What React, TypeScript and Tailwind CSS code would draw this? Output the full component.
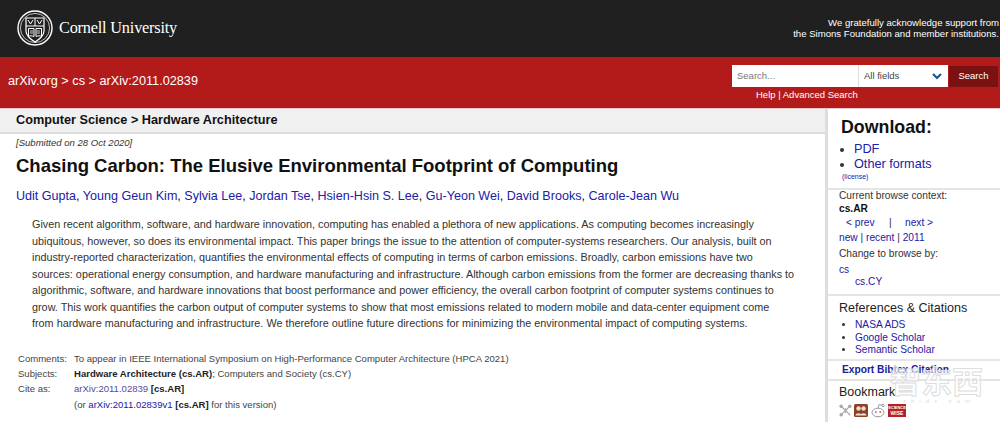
import React from "react";

const L = ({ children, className = "" }: { children: React.ReactNode; className?: string }) => (
  <a className={`text-[#2020a8] ${className}`}>{children}</a>
);

function Seal() {
  return (
    <svg width="36" height="36" viewBox="0 0 36 36" fill="none" stroke="#fff">
      <circle cx="18" cy="18" r="17" strokeWidth="1.4" />
      <circle cx="18" cy="18" r="14.6" strokeWidth="0.7" />
      <path d="M9 8h18v13c0 5-4.500 8-9 11-4.500-3-9-6-9-11z" strokeWidth="1.2" />
      <path d="M18 8v8M9 16h18" strokeWidth="1" />
      <path d="M11 10l2.500 4 2.500-4M20 10l2.500 4 2.500-4" strokeWidth="1" />
      <path d="M11.500 18.500h5.500v8c-2-.8-4-.8-5.500-.3zM24.500 18.500h-5.500v8c2-.8 4-.8 5.500-.3z" strokeWidth="1" />
      <path d="M13 21h3M13 23h3M20 21h3M20 23h3" strokeWidth="0.8" />
    </svg>
  );
}

function Bookmarks() {
  return (
    <div className="flex items-center gap-[2px] mt-[2px]">
      <svg width="13" height="13" viewBox="0 0 15 15" fill="none" stroke="#aaa" strokeWidth="1.300">
        <path d="M2 2l11 11M13 2L2 13M7.500 5v5" />
        <circle cx="2.500" cy="2.500" r="1.400" fill="#aaa" />
        <circle cx="12.500" cy="2.500" r="1.400" fill="#aaa" />
        <circle cx="2.500" cy="12.500" r="1.400" fill="#aaa" />
      </svg>
      <svg width="14" height="13" viewBox="0 0 14 13">
        <rect width="14" height="13" rx="1.500" fill="#8f3f28" />
        <circle cx="4.500" cy="4.500" r="2.200" fill="#efe0cc" />
        <circle cx="9.500" cy="4.500" r="2.200" fill="#efe0cc" />
        <path d="M1.500 11.500c0-3 6-3 6 0zM6.500 11.500c0-3 6-3 6 0z" fill="#efe0cc" />
      </svg>
      <svg width="16" height="15" viewBox="0 0 16 15" fill="#fff" stroke="#999" strokeWidth="1">
        <ellipse cx="8" cy="9.500" rx="6" ry="4.300" />
        <path d="M8 5l1-3.500 3 .8" fill="none" />
        <circle cx="13" cy="2.500" r="1.200" />
        <circle cx="5.800" cy="9" r="1" fill="#d66" stroke="none" />
        <circle cx="10.200" cy="9" r="1" fill="#d66" stroke="none" />
      </svg>
      <div className="w-[18px] h-[13px] bg-[#b3202a] flex flex-col items-center justify-center">
        <span className="text-[4px] leading-[5px] text-white font-bold">SCIENCE</span>
        <span className="text-[5px] leading-[6px] text-white font-bold">WISE</span>
      </div>
    </div>
  );
}

const ABSTRACT = [
  "Given recent algorithm, software, and hardware innovation, computing has enabled a plethora of new applications. As computing becomes increasingly",
  "ubiquitous, however, so does its environmental impact. This paper brings the issue to the attention of computer-systems researchers. Our analysis, built on",
  "industry-reported characterization, quantifies the environmental effects of computing in terms of carbon emissions. Broadly, carbon emissions have two",
  "sources: operational energy consumption, and hardware manufacturing and infrastructure. Although carbon emissions from the former are decreasing thanks to",
  "algorithmic, software, and hardware innovations that boost performance and power efficiency, the overall carbon footprint of computer systems continues to",
  "grow. This work quantifies the carbon output of computer systems to show that most emissions related to modern mobile and data-center equipment come",
  "from hardware manufacturing and infrastructure. We therefore outline future directions for minimizing the environmental impact of computing systems.",
];

export default function App() {
  return (
    <div className="relative w-[1000px] h-[422px] overflow-hidden bg-white text-[#111] font-['Liberation_Sans',Arial,sans-serif]">
      <header className="h-[57px] bg-[#202020] flex items-center justify-between pl-[17px] pr-0">
        <div className="flex items-center gap-[6px] -mt-[1px]">
          <Seal />
          <span className="font-['Liberation_Serif',serif] text-[16.300px] text-white tracking-[-0.2px]">Cornell University</span>
        </div>
        <div className="text-right text-[9.600px] leading-[11px] text-white pr-[1px] -mt-[2px]">
          <div>We gratefully acknowledge support from</div>
          <div>the Simons Foundation and member institutions.</div>
        </div>
      </header>
      <div className="h-[52px] bg-[#b31b1b] flex justify-between border-b-[1px] border-[#e8c8c8]">
        <div className="pl-[8px] pt-[15px] text-[12.700px] leading-[18px] text-white">arXiv.org &gt; cs &gt; arXiv:2011.02839</div>
        <div className="flex flex-col items-start pt-[8px]">
          <div className="flex h-[22px]">
            <div className="w-[127px] bg-white text-[#777] text-[9.500px] pl-[5px] leading-[21px] border-r border-[#ddd]">Search...</div>
            <div className="w-[89px] bg-white flex items-center justify-between pl-[5px] pr-[6px] text-[9.500px] text-[#444]">
              <span>All fields</span>
              <svg width="10" height="7" viewBox="0 0 10 7" fill="none" stroke="#1a5a8a" strokeWidth="2.200"><path d="M1 1l4 4 4-4" /></svg>
            </div>
            <div className="w-[49px] h-[21px] ml-[1px] mr-[2px] mt-[1px] bg-[#7a1212] text-white text-[9.500px] flex items-center justify-center">Search</div>
          </div>
          <div className="pl-[24px] mt-[1px] text-[9.500px] leading-[14px] text-white">Help | Advanced Search</div>
        </div>
      </div>
      <div className="flex h-[313px]">
        <main className="w-[825px] shrink-0">
          <div className="h-[25px] bg-[#f0f0f0] border-b-[2px] border-[#ddd] pl-[16px] text-[12.700px] font-bold leading-[23px] text-[#111]">Computer Science &gt; Hardware Architecture</div>
          <div className="pl-[16px] pt-[3px]">
            <div className="text-[9.550px] italic leading-[12px] text-[#333]">[Submitted on 28 Oct 2020]</div>
            <h1 className="mt-[5px] text-[18.500px] font-bold leading-[24px] text-[#111]">Chasing Carbon: The Elusive Environmental Footprint of Computing</h1>
            <div className="mt-[10px] text-[12.570px] leading-[16px]">
              <L>Udit Gupta</L>, <L>Young Geun Kim</L>, <L>Sylvia Lee</L>, <L>Jordan Tse</L>, <L>Hsien-Hsin S. Lee</L>, <L>Gu-Yeon Wei</L>, <L>David Brooks</L>, <L>Carole-Jean Wu</L>
            </div>
            <p className="mt-[12px] ml-[16px] text-[10.820px] leading-[16.500px] text-[#333] whitespace-nowrap">
              {ABSTRACT.map((line) => (
                <span key={line} className="block">{line}</span>
              ))}
            </p>
            <div className="mt-[19px] ml-[2px] grid grid-cols-[56px_1fr] text-[9.560px] leading-[15.400px] text-[#444]">
              <div>Comments:</div>
              <div>To appear in IEEE International Symposium on High-Performance Computer Architecture (HPCA 2021)</div>
              <div>Subjects:</div>
              <div><b className="text-[#222]">Hardware Architecture (cs.AR)</b>; Computers and Society (cs.CY)</div>
              <div>Cite as:</div>
              <div><a className="text-[#5a4a9a]">arXiv:2011.02839</a> <b className="text-[#222]">[cs.AR]</b></div>
              <div />
              <div>(or <a className="text-[#2020a8]">arXiv:2011.02839v1</a> <b className="text-[#222]">[cs.AR]</b> for this version)</div>
            </div>
          </div>
        </main>
        <aside className="w-[175px] border-l-[3px] border-[#ddd] text-[#333]">
          <div className="pl-[13px] pt-[8px] h-[81px] border-b-[2px] border-[#e5e5e5]">
            <div className="text-[17.800px] leading-[20px] font-bold text-[#111]">Download:</div>
            <ul className="mt-[5px] pl-[13px] list-disc text-[12.700px] leading-[15px] marker:text-[#333] text-[#2020a8]">
              <li>PDF</li>
              <li>Other formats</li>
            </ul>
            <div className="text-[7px] leading-[10px] pl-[1px] text-[#2020a8]">(license)</div>
          </div>
          <div className="pl-[11px] h-[106px] border-b-[2px] border-[#e5e5e5] text-[10.200px]">
            <div className="leading-[12px] mb-[1px]">Current browse context:</div>
            <div className="leading-[12px] font-bold text-[#111]">cs.AR</div>
            <div className="leading-[14px] mt-[1px] pl-[7px] flex text-[#2020a8]">
              <span className="w-[43px]">&lt; prev</span>
              <span className="w-[16px] text-[#333]">|</span>
              <span>next &gt;</span>
            </div>
            <div className="leading-[15px] text-[#333]"><L>new</L> | <L>recent</L> | <L>2011</L></div>
            <div className="leading-[14px] mt-[2px]">Change to browse by:</div>
            <div className="leading-[11px] mt-[3px] text-[#2020a8]">cs</div>
            <div className="leading-[13px] pl-[16px] text-[#2020a8]">cs.CY</div>
          </div>
          <div className="pl-[11px] pt-[4px] h-[65px] border-b-[2px] border-[#e5e5e5]">
            <div className="text-[12.550px] leading-[17px] text-[#222]">References &amp; Citations</div>
            <ul className="mt-[2px] pl-[16px] list-disc text-[10.200px] leading-[12.500px] marker:text-[#333] text-[#2020a8]">
              <li>NASA ADS</li>
              <li>Google Scholar</li>
              <li>Semantic Scholar</li>
            </ul>
          </div>
          <div className="h-[20px] pl-[14px] border-b-[2px] border-[#e5e5e5] text-[10.200px] font-bold leading-[18px] text-[#20209a]">Export Bibtex Citation</div>
          <div className="pl-[11px] pt-[3px]">
            <div className="text-[12.500px] leading-[17px] text-[#222]">Bookmark</div>
            <Bookmarks />
          </div>
        </aside>
      </div>
      <div className="absolute left-[890px] top-[362px] text-white/60 [-webkit-text-stroke:1px_#ddd] text-[31px] leading-[36px] font-bold font-['Noto_Sans_CJK_SC',sans-serif] whitespace-nowrap">智东西</div>
      <div className="absolute left-[903px] top-[397px] text-[#ddd] text-[6px] leading-[8px] tracking-[5px] whitespace-nowrap">zhidx.com</div>
    </div>
  );
}
